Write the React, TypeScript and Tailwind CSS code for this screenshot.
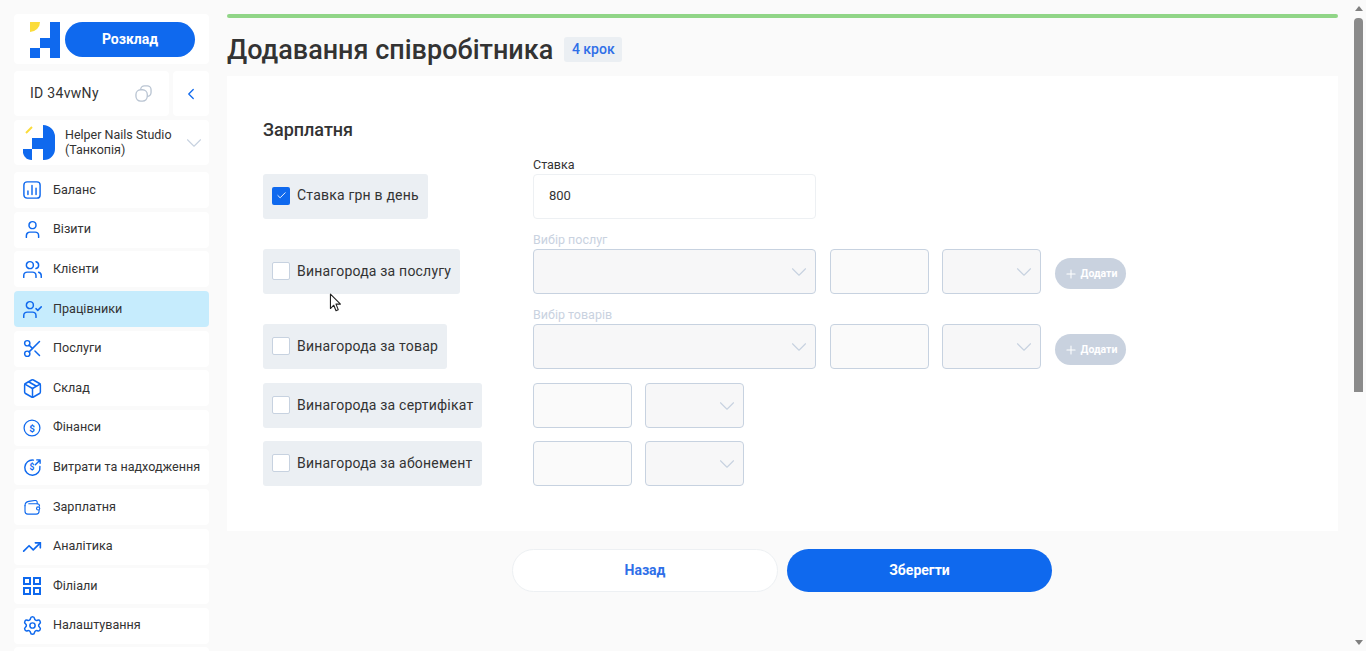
import React from "react";
import { User, Users, UserCheck, Scissors, Package, TrendingUp, Settings, ChevronDown, ChevronLeft, Plus, Check } from "lucide-react";

const Cls = "w-[21px] h-[21px] text-[#0f69ee]";

function Bars() {
  return (
    <svg viewBox="0 0 20 20" className="w-[18px] h-[18px]" fill="none" stroke="#0f69ee" strokeWidth="1.6" strokeLinecap="round">
      <rect x="1" y="1" width="18" height="18" rx="3.5" />
      <path d="M5.5 15v-4M10 15V5M14.5 15V8" />
    </svg>
  );
}
function Grid() {
  return (
    <svg viewBox="0 0 18 18" className="w-[18px] h-[18px]" fill="none" stroke="#0f69ee" strokeWidth="2">
      <rect x="1" y="1" width="6" height="6" /><rect x="11" y="1" width="6" height="6" />
      <rect x="1" y="11" width="6" height="6" /><rect x="11" y="11" width="6" height="6" />
    </svg>
  );
}
function Dollar() {
  return (
    <svg viewBox="0 0 20 20" className="w-[18px] h-[18px]" fill="none" stroke="#0f69ee" strokeWidth="1.4">
      <circle cx="10" cy="10" r="8.8" />
      <text x="10" y="14" textAnchor="middle" fontSize="11" fontWeight="700" fill="#0f69ee" stroke="none" fontFamily="Roboto">$</text>
    </svg>
  );
}
function DollarOut() {
  return (
    <svg viewBox="0 0 20 20" className="w-[19px] h-[19px]" fill="none" stroke="#0f69ee" strokeWidth="1.5" strokeLinecap="round" strokeLinejoin="round">
      <path d="M11 2.2A8 8 0 1 0 17.8 9" />
      <path d="M13 7l5-5M14.5 2H18v3.5" />
      <text x="9.5" y="13" textAnchor="middle" fontSize="9" fontWeight="700" fill="#0f69ee" stroke="none" fontFamily="Roboto">$</text>
    </svg>
  );
}
function WalletIcon() {
  return (
    <svg viewBox="0 0 18 16" className="w-[17px] h-[15px]" fill="none" stroke="#0f69ee" strokeWidth="1.2" strokeLinecap="round">
      <path d="M1 6C1 3.5 2.5 2 5 1.5l6.5-1c1.5-.2 2.5.6 2.5 2V4" />
      <path d="M1 6v6a3 3 0 0 0 3 3h9a3 3 0 0 0 3-3v-1" />
      <path d="M5 4h9a2.5 2.5 0 0 1 2.5 2.5" />
      <circle cx="15" cy="9" r="1.7" fill="#fff" />
    </svg>
  );
}

const menu: [string, React.ReactNode, boolean?][] = [
  ["Баланс", <Bars />],
  ["Візити", <User className={Cls} strokeWidth={1.7} />],
  ["Клієнти", <Users className={Cls} strokeWidth={1.7} />],
  ["Працівники", <UserCheck className={Cls} strokeWidth={1.7} />, true],
  ["Послуги", <Scissors className={Cls} strokeWidth={1.7} />],
  ["Склад", <Package className={Cls} strokeWidth={1.7} />],
  ["Фінанси", <Dollar />],
  ["Витрати та надходження", <DollarOut />],
  ["Зарплатня", <WalletIcon />],
  ["Аналітика", <TrendingUp className="w-[20px] h-[20px] text-[#0f69ee]" strokeWidth={2} />],
  ["Філіали", <Grid />],
  ["Налаштування", <Settings className={Cls} strokeWidth={1.7} />],
  ["", null],
];

function Logo() {
  return (
    <svg viewBox="0 0 30 36" className="w-[30px] h-[36px] shrink-0">
      <path d="M0 0h10a10 10 0 0 1-10 10z" fill="#fbdc3a" />
      <path d="M20 0h10v36H20V26H10V16h10zM0 26h10v10H0z" fill="#0f69ee" />
    </svg>
  );
}
function StudioLogo() {
  return (
    <svg viewBox="0 0 32 35" className="w-[32px] h-[35px] shrink-0">
      <path d="M3 8L9 2" stroke="#fbdc3a" strokeWidth="2" />
      <path d="M20 0a12 12 0 0 1 12 12v12a11 11 0 0 1-11 11h-1V24H9V13h11z" fill="#0f69ee" />
      <path d="M0 24h9v11A9 9 0 0 1 0 24z" fill="#0f69ee" />
    </svg>
  );
}
function CopyIcon() {
  return (
    <svg viewBox="0 0 18 18" className="w-[17px] h-[17px]" fill="none" stroke="#b9c4d2" strokeWidth="1.4">
      <rect x="6" y="1" width="11" height="11" rx="4" />
      <rect x="1" y="5" width="12" height="12" rx="5" fill="#fff" />
    </svg>
  );
}

function Cb({ label, checked, w }: { label: string; checked?: boolean; w: string }) {
  return (
    <div className={`h-[45px] ${w} bg-[#ebeff3] rounded-[3px] flex items-center pl-[9px] gap-[7px] shrink-0`}>
      <span className={`w-[18px] h-[18px] mb-[2px] rounded-[2px] flex items-center justify-center ${checked ? "bg-[#0f69ee]" : "bg-white border border-[#c7d2e0]"}`}>
        {checked && <Check className="w-[11px] h-[11px] text-white" strokeWidth={2} />}
      </span>
      <span className={`text-[14px] text-[#333] tracking-[0.2px] whitespace-nowrap ${checked ? "mb-[2px]" : ""}`}>{label}</span>
    </div>
  );
}
function Box({ w }: { w: string }) {
  return <div className={`${w} h-[45px] shrink-0 bg-[#fafafa] border border-[#c7d2e0] rounded-[4px]`} />;
}
function Chev() {
  return <ChevronDown className="w-[26px] h-[26px] text-[#c7d2e0]" strokeWidth={1} />;
}
function Sel({ w }: { w: string }) {
  return (
    <div className={`${w} h-[45px] shrink-0 bg-[#f7f7f8] border border-[#c7d2e0] rounded-[4px] flex items-center justify-end pr-[3px]`}>
      <Chev />
    </div>
  );
}
function AddBtn({ mt }: { mt: string }) {
  return (
    <div className={`w-[71px] h-[31px] ${mt} rounded-full bg-[#c9d2df] flex items-center justify-center gap-[3px] text-white shrink-0 ml-[14px]`}>
      <Plus className="w-[14px] h-[14px]" strokeWidth={1.8} />
      <span className="text-[10.5px] font-bold">Додати</span>
    </div>
  );
}

export default function App() {
  return (
    <div className="relative w-[1366px] h-[651px] overflow-hidden bg-[#fafafa] flex font-['Roboto',sans-serif] text-[#333]">
      <aside className="w-[195px] ml-[14px] mt-[14px] shrink-0 flex flex-col">
        <div className="h-[50px] shrink-0 bg-white rounded-[4px] flex items-start pl-[16px] pt-[8px] gap-[5px]">
          <Logo />
          <div className="w-[130px] h-[35px] rounded-full bg-[#0f69ee] text-white text-[14px] font-bold flex items-center justify-center">Розклад</div>
        </div>
        <div className="flex shrink-0 gap-[4px] mt-[7px] h-[45px]">
          <div className="w-[155px] bg-white rounded-[4px] flex items-center justify-between pl-[16px] pr-[17px]">
            <span className="text-[14px] tracking-[0.3px]">ID 34vwNy</span>
            <CopyIcon />
          </div>
          <div className="w-[36px] bg-white rounded-[4px] flex items-center justify-center">
            <ChevronLeft className="w-[18px] h-[18px] text-[#0f69ee]" strokeWidth={1.7} />
          </div>
        </div>
        <div className="mt-[4px] h-[45px] shrink-0 bg-white rounded-[4px] flex items-center pl-[9px] pr-[2px]">
          <StudioLogo />
          <span className="ml-[10px] mb-[2px] text-[12.5px] leading-[15px] flex-1">Helper Nails Studio<br />(Танкопія)</span>
          <Chev />
        </div>
        <nav className="mt-[7.3px] flex flex-col gap-[3.6px]">
          {menu.map(([t, ic, active], i) => (
            <div key={i} className={`h-[36px] shrink-0 rounded-[4px] flex items-center ${active ? "bg-[#c6ecfd]" : "bg-white"}`}>
              <span className="w-[36px] mr-[3px] flex justify-center">{ic}</span>
              <span className="text-[12.6px] whitespace-nowrap">{t}</span>
            </div>
          ))}
        </nav>
      </aside>

      <main className="ml-[18px] mt-[14px] w-[1111px] shrink-0 flex flex-col">
        <div className="h-[4px] shrink-0 rounded-full bg-[#90d587]" />
        <div className="flex items-center h-[58px] shrink-0 pt-[4px] gap-[11px]">
          <h1 className="text-[27px] font-medium text-[#333] whitespace-nowrap mt-[3px]">Додавання співробітника</h1>
          <span className="h-[25px] w-[58px] rounded-[3px] bg-[#ebeff3] flex items-center justify-center text-[14px] font-medium text-[#2f6fe8]">4 крок</span>
        </div>
        <section className="h-[455px] shrink-0 bg-white px-[36px] pt-[43px]">
          <h2 className="text-[18px] font-medium leading-[22px]">Зарплатня</h2>

          <div className="flex mt-[33px] relative">
            <div className="w-[270px]"><Cb checked label="Ставка грн в день" w="w-[165px]" /></div>
            <div className="w-[283px] h-[45px] border border-[#edf0f3] rounded-[4px] flex items-center pl-[15px] pb-[2px] text-[13px]">800</div>
            <span className="absolute left-[270px] -top-[17px] text-[12.5px] leading-[16px]">Ставка</span>
          </div>

          <div className="flex mt-[30px] relative items-start">
            <div className="w-[270px]"><Cb label="Винагорода за послугу" w="w-[197px]" /></div>
            <Sel w="w-[283px]" />
            <div className="ml-[14px]"><Box w="w-[99px]" /></div>
            <div className="ml-[13px]"><Sel w="w-[99px]" /></div>
            <AddBtn mt="mt-[9px]" />
            <span className="absolute left-[270px] -top-[17px] text-[12.5px] leading-[16px] text-[#c9d2df]">Вибір послуг</span>
          </div>

          <div className="flex mt-[30px] relative items-start">
            <div className="w-[270px]"><Cb label="Винагорода за товар" w="w-[184px]" /></div>
            <Sel w="w-[283px]" />
            <div className="ml-[14px]"><Box w="w-[99px]" /></div>
            <div className="ml-[13px]"><Sel w="w-[99px]" /></div>
            <AddBtn mt="mt-[10px]" />
            <span className="absolute left-[270px] -top-[17px] text-[12.5px] leading-[16px] text-[#c9d2df]">Вибір товарів</span>
          </div>

          <div className="flex mt-[14px]">
            <div className="w-[270px]"><Cb label="Винагорода за сертифікат" w="w-[219px]" /></div>
            <Box w="w-[99px]" />
            <div className="ml-[13px]"><Sel w="w-[99px]" /></div>
          </div>

          <div className="flex mt-[13px]">
            <div className="w-[270px]"><Cb label="Винагорода за абонемент" w="w-[219px]" /></div>
            <Box w="w-[99px]" />
            <div className="ml-[13px]"><Sel w="w-[99px]" /></div>
          </div>
        </section>
        <div className="flex shrink-0 mt-[18px] ml-[285px] gap-[9px]">
          <div className="w-[266px] h-[43px] rounded-full bg-white border border-[#edf0f3] flex items-center justify-center text-[14px] font-bold text-[#2f6fe8]">Назад</div>
          <div className="w-[265px] h-[43px] rounded-full bg-[#0f69ee] flex items-center justify-center text-[14px] font-bold text-white">Зберегти</div>
        </div>
      </main>

      <svg viewBox="0 0 12 18" className="absolute left-[329px] top-[293px] w-[14px] h-[20px]">
        <path d="M1 1v13l3-3 2 5 2-1-2-5h4z" fill="#fff" stroke="#222" strokeWidth="1" strokeLinejoin="round" />
      </svg>

      <div className="absolute right-0 top-0 w-[14px] h-[651px] bg-[#fafafa]">
        <div className="absolute left-[3px] top-[6px] w-0 h-0 border-l-[4px] border-r-[4px] border-b-[5px] border-l-transparent border-r-transparent border-b-[#808080]" />
        <div className="absolute left-[2px] top-[18px] w-[9px] h-[374px] rounded-t-[4px] bg-[#8a8a8a]" />
        <div className="absolute left-[3px] bottom-[6px] w-0 h-0 border-l-[4px] border-r-[4px] border-t-[5px] border-l-transparent border-r-transparent border-t-[#808080]" />
      </div>
    </div>
  );
}
